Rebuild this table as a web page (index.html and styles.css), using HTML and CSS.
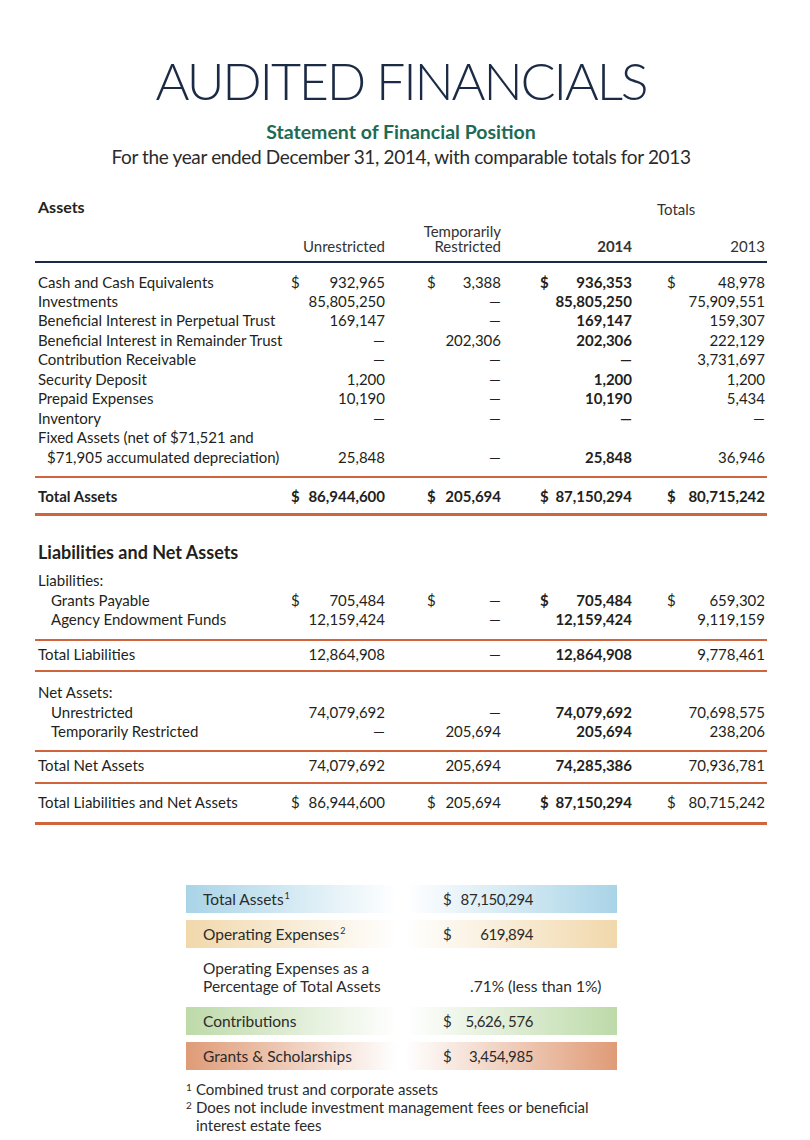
FILE: index.html
```html
<!DOCTYPE html>
<html lang="en">
<head>
<meta charset="utf-8">
<title>Audited Financials</title>
<link rel="stylesheet" href="styles.css">
</head>
<body>
<main class="page">
  <header class="masthead">
    <h1 class="title">AUDITED FINANCIALS</h1>
    <h2 class="subtitle">Statement of Financial Position</h2>
    <p class="period">For the year ended December 31, 2014, with comparable totals for 2013</p>
  </header>

  <section class="statement">
    <div class="row top-head">
      <div class="label section-title">Assets</div>
      <div></div><div></div><div></div>
      <div class="totals">Totals</div>
    </div>
    <div class="row col-head">
      <div></div>
      <div class="hcell">Unrestricted</div>
      <div class="hcell"><span class="hline">Temporarily</span><span class="hline">Restricted</span></div>
      <div class="hcell bold">2014</div>
      <div class="hcell">2013</div>
    </div>

    <div class="block assets">
      <div class="row"><div class="label">Cash and Cash Equivalents</div><div class="num"><span>$</span><span>932,965</span></div><div class="num"><span>$</span><span>3,388</span></div><div class="num bold"><span>$</span><span>936,353</span></div><div class="num"><span>$</span><span>48,978</span></div></div>
      <div class="row"><div class="label">Investments</div><div class="num"><span class="v">85,805,250</span></div><div class="num"><span class="v">—</span></div><div class="num bold"><span class="v">85,805,250</span></div><div class="num"><span class="v">75,909,551</span></div></div>
      <div class="row"><div class="label">Beneficial Interest in Perpetual Trust</div><div class="num"><span class="v">169,147</span></div><div class="num"><span class="v">—</span></div><div class="num bold"><span class="v">169,147</span></div><div class="num"><span class="v">159,307</span></div></div>
      <div class="row"><div class="label">Beneficial Interest in Remainder Trust</div><div class="num"><span class="v">—</span></div><div class="num"><span class="v">202,306</span></div><div class="num bold"><span class="v">202,306</span></div><div class="num"><span class="v">222,129</span></div></div>
      <div class="row"><div class="label">Contribution Receivable</div><div class="num"><span class="v">—</span></div><div class="num"><span class="v">—</span></div><div class="num bold"><span class="v">—</span></div><div class="num"><span class="v">3,731,697</span></div></div>
      <div class="row"><div class="label">Security Deposit</div><div class="num"><span class="v">1,200</span></div><div class="num"><span class="v">—</span></div><div class="num bold"><span class="v">1,200</span></div><div class="num"><span class="v">1,200</span></div></div>
      <div class="row"><div class="label">Prepaid Expenses</div><div class="num"><span class="v">10,190</span></div><div class="num"><span class="v">—</span></div><div class="num bold"><span class="v">10,190</span></div><div class="num"><span class="v">5,434</span></div></div>
      <div class="row"><div class="label">Inventory</div><div class="num"><span class="v">—</span></div><div class="num"><span class="v">—</span></div><div class="num bold"><span class="v">—</span></div><div class="num"><span class="v">—</span></div></div>
      <div class="row"><div class="label">Fixed Assets (net of $71,521 and</div><div></div><div></div><div></div><div></div></div>
      <div class="row"><div class="label indent-sm">$71,905 accumulated depreciation)</div><div class="num"><span class="v">25,848</span></div><div class="num"><span class="v">—</span></div><div class="num bold"><span class="v">25,848</span></div><div class="num"><span class="v">36,946</span></div></div>
    </div>

    <div class="block total-assets">
      <div class="row bold"><div class="label">Total Assets</div><div class="num"><span>$</span><span>86,944,600</span></div><div class="num"><span>$</span><span>205,694</span></div><div class="num"><span>$</span><span>87,150,294</span></div><div class="num"><span>$</span><span>80,715,242</span></div></div>
    </div>

    <h3 class="section-title liab-title">Liabilities and Net Assets</h3>

    <div class="block liabilities">
      <div class="row"><div class="label">Liabilities:</div><div></div><div></div><div></div><div></div></div>
      <div class="row"><div class="label indent">Grants Payable</div><div class="num"><span>$</span><span>705,484</span></div><div class="num"><span>$</span><span>—</span></div><div class="num bold"><span>$</span><span>705,484</span></div><div class="num"><span>$</span><span>659,302</span></div></div>
      <div class="row"><div class="label indent">Agency Endowment Funds</div><div class="num"><span class="v">12,159,424</span></div><div class="num"><span class="v">—</span></div><div class="num bold"><span class="v">12,159,424</span></div><div class="num"><span class="v">9,119,159</span></div></div>
    </div>

    <div class="block total-liab">
      <div class="row"><div class="label">Total Liabilities</div><div class="num"><span class="v">12,864,908</span></div><div class="num"><span class="v">—</span></div><div class="num bold"><span class="v">12,864,908</span></div><div class="num"><span class="v">9,778,461</span></div></div>
    </div>

    <div class="block net-assets">
      <div class="row"><div class="label">Net Assets:</div><div></div><div></div><div></div><div></div></div>
      <div class="row"><div class="label indent">Unrestricted</div><div class="num"><span class="v">74,079,692</span></div><div class="num"><span class="v">—</span></div><div class="num bold"><span class="v">74,079,692</span></div><div class="num"><span class="v">70,698,575</span></div></div>
      <div class="row"><div class="label indent">Temporarily Restricted</div><div class="num"><span class="v">—</span></div><div class="num"><span class="v">205,694</span></div><div class="num bold"><span class="v">205,694</span></div><div class="num"><span class="v">238,206</span></div></div>
    </div>

    <div class="block total-net">
      <div class="row"><div class="label">Total Net Assets</div><div class="num"><span class="v">74,079,692</span></div><div class="num"><span class="v">205,694</span></div><div class="num bold"><span class="v">74,285,386</span></div><div class="num"><span class="v">70,936,781</span></div></div>
    </div>

    <div class="block grand-total">
      <div class="row"><div class="label">Total Liabilities and Net Assets</div><div class="num"><span>$</span><span>86,944,600</span></div><div class="num"><span>$</span><span>205,694</span></div><div class="num bold"><span>$</span><span>87,150,294</span></div><div class="num"><span>$</span><span>80,715,242</span></div></div>
    </div>
  </section>

  <section class="summary">
    <div class="bar blue"><div class="s-label">Total Assets<sup>1</sup></div><div class="s-val"><span>$</span><span>87,150,294</span></div></div>
    <div class="bar tan"><div class="s-label">Operating Expenses<sup>2</sup></div><div class="s-val"><span>$</span><span>619,894</span></div></div>
    <div class="pct"><div class="s-label">Operating Expenses as a<br>Percentage of Total Assets</div><div class="pct-val">.71% (less than 1%)</div></div>
    <div class="bar green"><div class="s-label">Contributions</div><div class="s-val"><span>$</span><span>5,626, 576</span></div></div>
    <div class="bar salmon"><div class="s-label">Grants &amp; Scholarships</div><div class="s-val"><span>$</span><span>3,454,985</span></div></div>

    <ol class="notes">
      <li><span class="mark">1</span><span>Combined trust and corporate assets</span></li>
      <li><span class="mark">2</span><span>Does not include investment management fees or beneficial interest estate fees</span></li>
    </ol>
  </section>
</main>
</body>
</html>
```

FILE: styles.css
```css
* { box-sizing: border-box; }

html, body {
  margin: 0;
  padding: 0;
  background: #ffffff;
}

body {
  font-family: Lato, "Noto Sans", sans-serif;
  color: #231f20;
}

.page {
  width: 810px;
  height: 1140px;
  overflow: hidden;
}

/* ---------- masthead ---------- */
.masthead {
  text-align: center;
  padding-right: 8px;
}

.title {
  margin: 0;
  padding-top: 49px;
  font-size: 52px;
  line-height: 62px;
  font-weight: 300;
  letter-spacing: -2.2px;
  color: #1c2b45;
}

.subtitle {
  margin: 10px 0 0;
  font-size: 19.5px;
  line-height: 22px;
  font-weight: 700;
  color: #1d6b54;
}

.period {
  margin: 2px 0 0;
  font-size: 19px;
  line-height: 24px;
  font-weight: 400;
  letter-spacing: -0.35px;
  color: #2b2b2b;
}

/* ---------- statement table ---------- */
.statement {
  margin: 28px 43px 0 35px;
  font-size: 15px;
}

.row {
  display: grid;
  grid-template-columns: 253px 94px 116px 131px 133px;
  line-height: 19.45px;
  padding-left: 3px;
}

.label {
  white-space: nowrap;
}

.indent { padding-left: 13px; }
.indent-sm { padding-left: 9px; }

.bold { font-weight: 700; }

.num {
  display: flex;
  justify-content: space-between;
  white-space: nowrap;
}

.num .v { margin-left: auto; }

.row > .num:nth-child(3) { padding-left: 42px; }
.row > .num:nth-child(4) { padding-left: 39px; }
.row > .num:nth-child(5) { padding-left: 35px; }

.section-title {
  font-weight: 700;
  font-size: 16px;
}

.top-head {
  line-height: 20px;
}

.totals {
  padding-left: 25px;
  color: #333;
  line-height: 24px;
}

.col-head {
  margin-top: 3px;
  padding-bottom: 6.5px;
  line-height: 15px;
  border-bottom: 2px solid #1b2b45;
  align-items: end;
}

.hcell {
  text-align: right;
  color: #333;
}

.hline {
  display: block;
  line-height: 15px;
}

.block { border-bottom: 2px solid #d0643c; }

.assets { padding: 10px 0 9px; }

.total-assets {
  padding: 8.5px 0 7.5px;
  border-bottom-width: 3px;
}

.liab-title {
  margin: 25px 0 0;
  padding-left: 3px;
  font-size: 18px;
  line-height: 22px;
}

.liabilities { padding: 8px 0 9px; }
.total-liab { padding: 4.5px 0 5px; }
.net-assets { padding: 11.5px 0 8px; }
.total-net { padding: 4.5px 0 6.5px; }
.grand-total {
  padding: 9px 0 9px;
  border-bottom-width: 3px;
}

/* ---------- summary ---------- */
.summary {
  margin: 60px 0 0 186px;
  width: 431px;
  font-size: 15.5px;
  color: #2b2b2b;
}

.bar, .pct {
  display: grid;
  grid-template-columns: 257px 90px 84px;
}

.bar {
  height: 28px;
  line-height: 28px;
}

.bar + .bar { margin-top: 7px; }

.s-label {
  padding-left: 17px;
  white-space: nowrap;
}

.s-label sup {
  font-size: 9px;
  line-height: 0;
  vertical-align: 6px;
  margin-left: 1px;
}

.s-val {
  display: flex;
  justify-content: space-between;
  font-size: 15px;
  letter-spacing: -0.4px;
}

.blue   { background: linear-gradient(to right, #a9d4e7 0%, #ffffff 49%, #ffffff 51%, #a9d4e7 100%); }
.tan    { background: linear-gradient(to right, #f1d8ab 0%, #ffffff 49%, #ffffff 51%, #f1d8ab 100%); }
.green  { background: linear-gradient(to right, #bddaa9 0%, #ffffff 49%, #ffffff 51%, #bddaa9 100%); }
.salmon { background: linear-gradient(to right, #df9b77 0%, #ffffff 49%, #ffffff 51%, #df9b77 100%); }

.pct {
  margin: 11px 0 12px;
  line-height: 18px;
  align-items: end;
}

.pct-val {
  grid-column: 2 / 4;
  padding-left: 27px;
  white-space: nowrap;
}

.notes {
  list-style: none;
  margin: 10px 0 0;
  padding: 0;
  font-size: 15px;
  line-height: 18px;
  width: 420px;
}

.notes li {
  display: flex;
}

.mark {
  flex: none;
  width: 10px;
  font-size: 10px;
  line-height: 14px;
}
```
